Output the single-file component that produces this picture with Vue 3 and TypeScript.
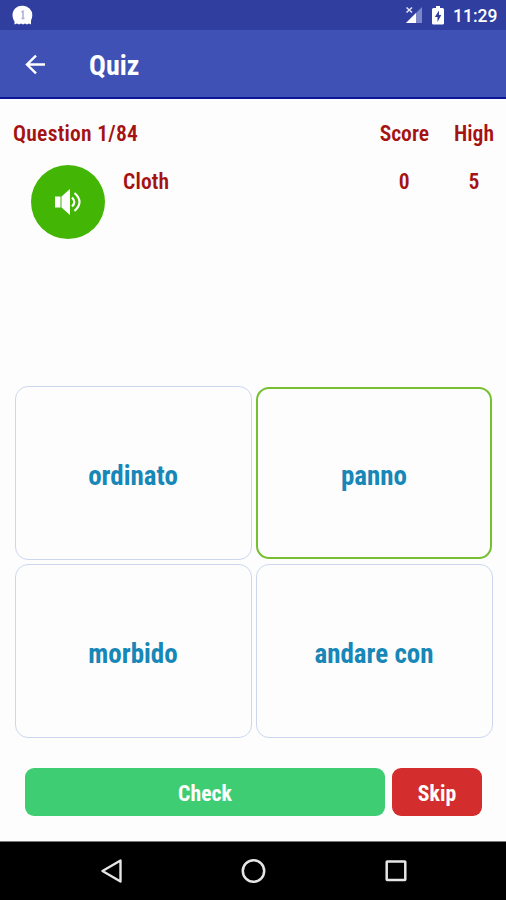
<script setup lang="ts">
import { ref } from 'vue'

interface Answer {
  id: number
  text: string
}

const question = { index: 1, total: 84, word: 'Cloth' }
const scores = [
  { label: 'Score', value: 0 },
  { label: 'High', value: 5 },
]
const answers: Answer[] = [
  { id: 1, text: 'ordinato' },
  { id: 2, text: 'panno' },
  { id: 3, text: 'morbido' },
  { id: 4, text: 'andare con' },
]
const selected = ref(2)
</script>

<template>
  <div class="screen">
    <div class="status">
      <svg class="notice" width="22" height="22" viewBox="0 0 22 22">
        <path d="M11 .8a9.300 9.300 0 0 1 9.300 9.300c0 2.500-1 4.500-1.300 6V19.500l-2-1-2 1-2-1-2 1-2-1-2 1-2-1-2.500 1v-3c-1-1.500-2-3.500-2-6.400A9.300 9.300 0 0 1 11 .8z" fill="#fff" />
        <path d="M9.500 7l1.500-.7v7M9.500 13.500h3" fill="none" stroke="#a9afd8" stroke-width="1.500" />
      </svg>
      <div class="status-right">
        <svg width="18" height="18" viewBox="0 0 18 18">
          <path d="M17 1v16H1z" fill="#7c87c8" />
          <path d="M11 7v10H1z" fill="#fff" />
          <path d="M0 0h9v7H0z" fill="#303f9f" />
          <path d="M1.500 1.500l5.500 5M7 1.500l-5.500 5" stroke="#e4e6f5" stroke-width="1.500" />
        </svg>
        <svg class="battery" width="12" height="19" viewBox="0 0 12 19">
          <path d="M4 0h4v2h2.500Q12 2 12 3.500v14Q12 18.500 10.500 18.500h-9Q0 18.500 0 17.500v-14Q0 2 1.500 2H4z" fill="#fff" />
          <path d="M7 4.500L2.800 11H5.500v5L9.300 9H7z" fill="#303f9f" />
        </svg>
        <span class="clock">11:29</span>
      </div>
    </div>

    <header class="toolbar">
      <svg class="back" width="22" height="22" viewBox="0 0 22 22">
        <path d="M21 11.500H3M12 2.700L3 11.500l9 8.800" fill="none" stroke="#fff" stroke-width="2.400" />
      </svg>
      <h1 class="title">Quiz</h1>
    </header>

    <main class="content">
      <section class="summary">
        <div class="prompt">
          <div class="label counter">Question {{ question.index }}/{{ question.total }}</div>
          <div class="prompt-row">
            <button class="speaker" aria-label="Play">
              <svg width="28" height="28" viewBox="0 0 28 28">
                <path d="M1 8.500h5.500v11H1zM7.500 8.500L16 1v26l-8.500-7.500z" fill="#fff" />
                <path d="M18 9.500q4.500 4.500 0 9M20.500 5q10 9 0 18" fill="none" stroke="#fff" stroke-width="2.200" />
              </svg>
            </button>
            <div class="label word">{{ question.word }}</div>
          </div>
        </div>
        <div v-for="s in scores" :key="s.label" class="score">
          <div class="label">{{ s.label }}</div>
          <div class="label value">{{ s.value }}</div>
        </div>
      </section>

      <section class="answers">
        <button
          v-for="a in answers"
          :key="a.id"
          class="answer"
          :class="{ selected: a.id === selected }"
          @click="selected = a.id"
        >
          <span>{{ a.text }}</span>
        </button>
      </section>

      <section class="actions">
        <button class="action check">Check</button>
        <button class="action skip">Skip</button>
      </section>
    </main>

    <nav class="navbar">
      <svg width="22" height="26" viewBox="0 0 22 26">
        <path d="M19.500 2.500v21L1.500 13z" fill="none" stroke="#e6e6e6" stroke-width="2.400" stroke-linejoin="round" />
      </svg>
      <svg width="26" height="26" viewBox="0 0 26 26">
        <circle cx="12.500" cy="13" r="10.700" fill="none" stroke="#e6e6e6" stroke-width="2.500" />
      </svg>
      <svg width="22" height="26" viewBox="0 0 22 26">
        <rect x="1.700" y="3.500" width="18.600" height="18.600" rx="0.500" fill="none" stroke="#e6e6e6" stroke-width="2.500" />
      </svg>
    </nav>
  </div>
</template>

<style>
body {
  margin: 0;
}
</style>

<style scoped>
.screen {
  display: flex;
  flex-direction: column;
  width: 506px;
  height: 900px;
  overflow: hidden;
  background: #fdfdfd;
  font-family: 'Roboto Condensed', Roboto, sans-serif;
  font-stretch: 75%;
  font-weight: 700;
}
button {
  margin: 0;
  padding: 0;
  border: 0;
  font: inherit;
}
.status {
  display: flex;
  flex: none;
  justify-content: space-between;
  box-sizing: border-box;
  height: 30px;
  padding: 5px 9px 0 12px;
  background: #303f9f;
}
.status-right {
  display: flex;
  align-items: flex-start;
  padding-top: 1px;
}
.battery {
  margin-left: 9px;
}
.clock {
  width: 44px;
  margin-left: 9px;
  color: #fff;
  font-family: Roboto, sans-serif;
  font-size: 17.500px;
  font-stretch: 100%;
  font-weight: 500;
  line-height: 20px;
}
.toolbar {
  display: flex;
  flex: none;
  align-items: center;
  box-sizing: border-box;
  height: 69px;
  padding: 1px 24px 0;
  border-bottom: 2px solid #0d1594;
  background: #3f51b5;
}
.title {
  margin: 0 0 0 43px;
  padding-top: 3px;
  color: #fff;
  font-size: 28px;
  line-height: 32px;
}
.content {
  display: flex;
  flex: 1;
  flex-direction: column;
}
.summary {
  display: flex;
  height: 287px;
  box-sizing: border-box;
  padding: 23px 12px 0 13px;
}
.label {
  color: #a51212;
  font-size: 21.600px;
  font-weight: 600;
  line-height: 24px;
  white-space: nowrap;
}
.counter {
  letter-spacing: 0.250px;
}
.prompt {
  flex: 1;
}
.prompt-row {
  display: flex;
  padding: 19px 0 0 18px;
}
.speaker {
  display: flex;
  align-items: center;
  justify-content: center;
  width: 74px;
  height: 74px;
  border-radius: 50%;
  background: #43b505;
}
.word {
  margin: 5px 0 0 18px;
  letter-spacing: 0.150px;
}
.score {
  text-align: center;
}
.score + .score {
  margin-left: 25px;
}
.value {
  margin-top: 24px;
}
.answers {
  display: grid;
  grid-template-columns: 237px 237px;
  grid-auto-rows: 174px;
  gap: 4px;
  padding-left: 15px;
}
.answer {
  padding: 5px 1px 0 0;
  border: 1.500px solid #ccd7ef;
  border-radius: 13px;
  background: transparent;
  color: #1787b7;
  font-size: 27px;
}
.answer.selected {
  margin: 1px 1px 1px 0;
  padding-right: 0;
  border: 2px solid #76bf30;
}
.actions {
  display: flex;
  gap: 7px;
  padding: 30px 24px 0 25px;
}
.action {
  height: 48px;
  padding-top: 2px;
  border-radius: 9px;
  color: #fff;
  font-size: 21.700px;
}
.check {
  flex: 1;
  background: #3fcd74;
}
.skip {
  width: 90px;
  background: #d32d2d;
}
.navbar {
  display: flex;
  flex: none;
  align-items: center;
  justify-content: space-between;
  box-sizing: border-box;
  height: 59px;
  padding: 0 99px 0 101px;
  border-top: 1px solid #777;
  background: #000;
}
</style>
